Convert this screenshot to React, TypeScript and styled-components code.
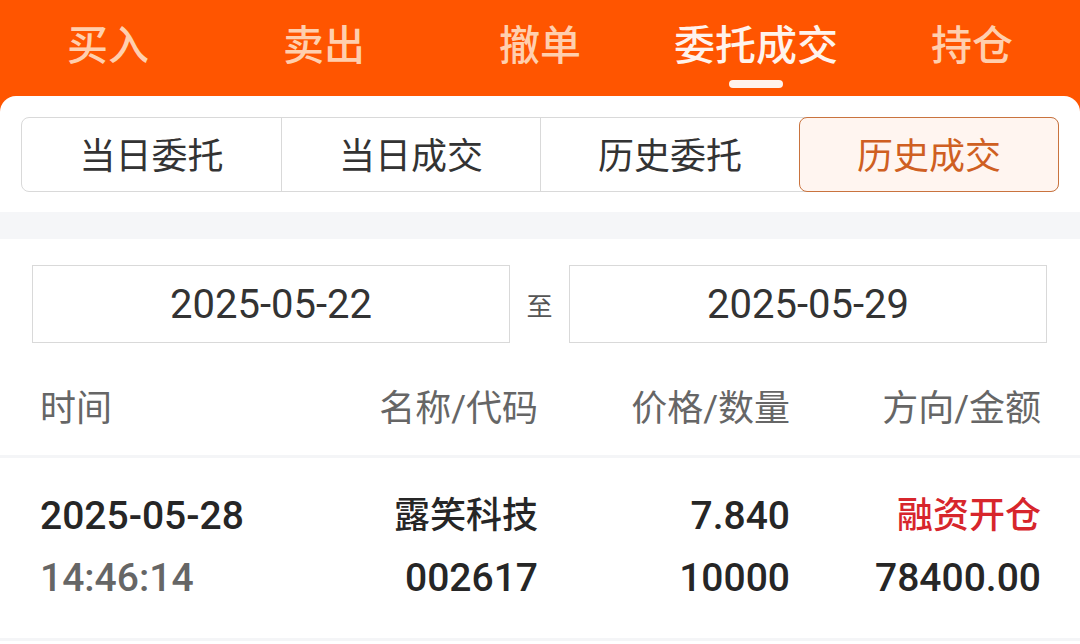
import React from 'react'
import styled, { createGlobalStyle } from 'styled-components'

const GlobalStyle = createGlobalStyle`
  html, body {
    margin: 0;
    padding: 0;
    background: #ff5500;
  }
  body {
    font-family: Roboto, 'Noto Sans CJK SC', sans-serif;
  }
`

const Page = styled.div`
  width: 1080px;
  height: 644px;
  overflow: hidden;
  background: #ff5500;
  display: flex;
  flex-direction: column;
`

const TopTabs = styled.div`
  height: 96px;
  display: grid;
  grid-template-columns: repeat(5, 1fr);
  flex-shrink: 0;
`

const TopTab = styled.div<{ $active?: boolean }>`
  position: relative;
  display: flex;
  justify-content: center;
  padding-top: 22px;
  font-size: 41px;
  font-weight: 500;
  line-height: 48px;
  color: ${(p) => (p.$active ? '#fff3ec' : '#ffcfae')};
`

const Indicator = styled.span`
  position: absolute;
  left: 50%;
  top: 80px;
  width: 54px;
  height: 8px;
  margin-left: -27px;
  border-radius: 4px;
  background: #fff3ec;
`

const Card = styled.div`
  flex: 1;
  background: #ffffff;
  border-radius: 16px 16px 0 0;
  display: flex;
  flex-direction: column;
`

const Segments = styled.div`
  margin: 21px 21px 0;
  height: 73px;
  display: grid;
  grid-template-columns: repeat(4, 1fr);
  border: 1px solid #d9d9d9;
  border-radius: 8px;
`

const Segment = styled.div<{ $active?: boolean; $first?: boolean }>`
  display: flex;
  align-items: center;
  justify-content: center;
  padding-bottom: 4px;
  font-size: 36px;
  color: ${(p) => (p.$active ? '#cf5f22' : '#333333')};
  background: ${(p) => (p.$active ? '#fff5f0' : 'transparent')};
  border-left: ${(p) => (p.$first ? 'none' : '1px solid #d9d9d9')};
  ${(p) =>
    p.$active &&
    `
    margin: -1px -1px -1px 0;
    border: 1px solid #c9733e;
    border-radius: 8px;
  `}
`

const GreyStrip = styled.div`
  margin-top: 20px;
  height: 27px;
  background: #f5f6f8;
`

const DateRow = styled.div`
  display: flex;
  align-items: center;
  padding: 26px 32px 0 32px;
`

const DateBox = styled.div`
  width: 476px;
  height: 76px;
  border: 1px solid #d9d9d9;
  display: flex;
  align-items: center;
  justify-content: center;
  font-size: 40px;
  color: #333333;
`

const DateSep = styled.div`
  width: 59px;
  text-align: center;
  font-size: 26px;
  color: #555555;
`

const HeaderRow = styled.div`
  display: grid;
  grid-template-columns: 240px 258px 252px 251px;
  padding: 46px 40px 0 40px;
  height: 66px;
  font-size: 36px;
  line-height: 40px;
  color: #666666;
  border-bottom: 3px solid #f4f5f7;
`

const Cell = styled.div<{ $right?: boolean }>`
  text-align: ${(p) => (p.$right ? 'right' : 'left')};
  display: flex;
  flex-direction: column;
  gap: 22px;
`

const DataRow = styled.div`
  display: grid;
  grid-template-columns: 240px 258px 252px 251px;
  padding: 38px 40px 0 40px;
  height: 142px;
  border-bottom: 3px solid #f4f5f7;
`

const Line = styled.div<{ $color?: string; $num?: boolean }>`
  font-size: ${(p) => (p.$num ? '39px' : '36px')};
  font-weight: 500;
  line-height: 40px;
  color: ${(p) => p.$color || '#262626'};
`

const topTabs = ['买入', '卖出', '撤单', '委托成交', '持仓']
const segments = ['当日委托', '当日成交', '历史委托', '历史成交']

export default function App() {
  return (
    <>
      <GlobalStyle />
      <Page>
        <TopTabs>
          {topTabs.map((t) => (
            <TopTab key={t} $active={t === '委托成交'}>
              {t}
              {t === '委托成交' && <Indicator />}
            </TopTab>
          ))}
        </TopTabs>
        <Card>
          <Segments>
            {segments.map((s, i) => (
              <Segment key={s} $first={i === 0} $active={s === '历史成交'}>
                {s}
              </Segment>
            ))}
          </Segments>
          <GreyStrip />
          <DateRow>
            <DateBox>2025-05-22</DateBox>
            <DateSep>至</DateSep>
            <DateBox>2025-05-29</DateBox>
          </DateRow>
          <HeaderRow>
            <Cell>时间</Cell>
            <Cell $right>名称/代码</Cell>
            <Cell $right>价格/数量</Cell>
            <Cell $right>方向/金额</Cell>
          </HeaderRow>
          <DataRow>
            <Cell>
              <Line $num>2025-05-28</Line>
              <Line $num $color="#666666">14:46:14</Line>
            </Cell>
            <Cell $right>
              <Line>露笑科技</Line>
              <Line $num>002617</Line>
            </Cell>
            <Cell $right>
              <Line $num>7.840</Line>
              <Line $num>10000</Line>
            </Cell>
            <Cell $right>
              <Line $color="#d7262c">融资开仓</Line>
              <Line $num>78400.00</Line>
            </Cell>
          </DataRow>
        </Card>
      </Page>
    </>
  )
}
